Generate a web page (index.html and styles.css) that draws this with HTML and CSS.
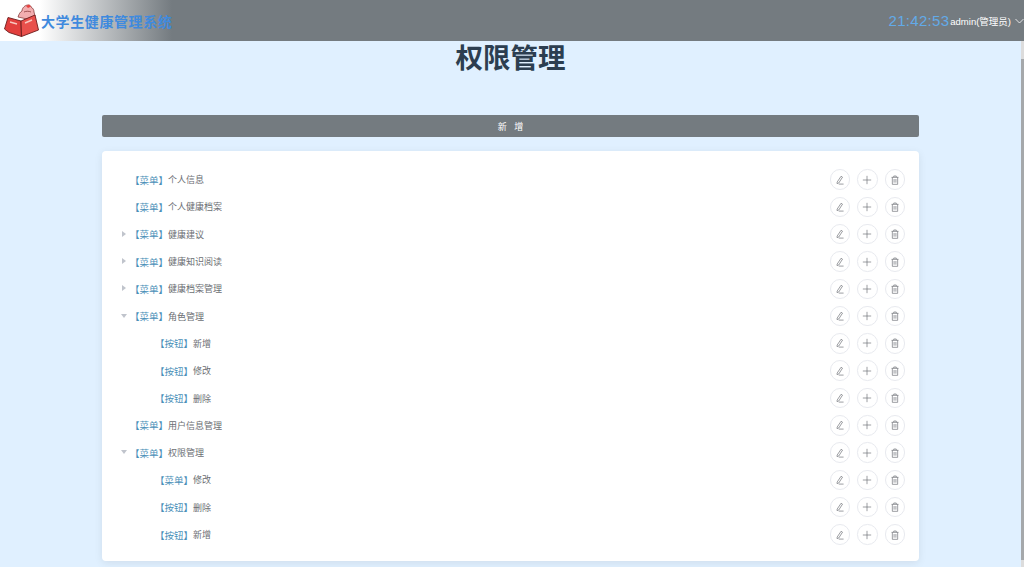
FILE: index.html
```html
<!DOCTYPE html>
<html>
<head>
    <meta charset="utf-8">
    <title>权限管理</title>
    <link rel="stylesheet" href="styles.css">
</head>
<body>
    <svg width="0" height="0" class="defs">
        <symbol id="icon-edit" viewBox="0 0 12 12">
            <path d="M2.600 8.500 7.300 1.500l1.700 1.100-4.500 7-2.100.7z" fill="none" stroke="currentColor" stroke-width=".8"/>
            <path d="M4.500 10.900h5.800" fill="none" stroke="currentColor" stroke-width=".8"/>
        </symbol>
        <symbol id="icon-plus" viewBox="0 0 12 12">
            <path d="M6 1v10M1 6h10" fill="none" stroke="currentColor" stroke-width=".8"/>
        </symbol>
        <symbol id="icon-del" viewBox="0 0 12 12">
            <path d="M1.800 2.800h8.400M4.500 2.800V1.200h3v1.600M2.800 2.800v8.400h6.400V2.800M4.900 4.800v4.400M7.100 4.800v4.400" fill="none" stroke="currentColor" stroke-width=".8"/>
        </symbol>
    </svg>

    <header class="topbar">
        <div class="brand">
            <svg class="logo" width="36" height="34" viewBox="0 0 36 34">
                <path d="M14 13c1-3 2-5 4-6 0-3 3-6 6-6 2 0 3 1 3 2 2 1 3 3 3 5l1 4-8 3z" fill="#f2aeb0" stroke="#7a2b2b" stroke-width=".7"/>
                <path d="M20 8c2-1 5-1 7 0" fill="none" stroke="#7a2b2b" stroke-width=".7"/>
                <path d="M22 2l3-1.500 2 2-3 1.500z" fill="#e8413e"/>
                <path d="M4 13.500 17 17l.5 15.500L5 28.500 0.500 25z" fill="#e23f3d" stroke="#6d1c1c" stroke-width=".9"/>
                <path d="M17 17 31 11l3.500 15-17 6.500z" fill="#e9504c" stroke="#6d1c1c" stroke-width=".9"/>
                <path d="M6 18l7 2M21 19l7-3" stroke="#f8c8c0" stroke-width="1.400" fill="none"/>
            </svg>
            <span class="brand-name">大学生健康管理系统</span>
        </div>
        <div class="user">
            <span class="clock">21:42:53</span>
            <span class="user-name">admin(管理员)</span>
            <svg class="caret" width="9" height="6" viewBox="0 0 9 6"><path d="M.5 1l4 4 4-4" fill="none" stroke="#fff" stroke-width=".8"/></svg>
        </div>
    </header>

    <div class="body-wrap">
        <main class="content">
            <h1 class="page-title">权限管理</h1>
            <button class="add-btn">新&nbsp;&nbsp;&nbsp;增</button>
            <div class="tree-card" id="tree"></div>
        </main>
        <div class="scrollbar"><div class="scroll-thumb"></div></div>
    </div>

    <script>
        const nodes = [
            { type: "菜单", name: "个人信息", level: 0, arrow: "" },
            { type: "菜单", name: "个人健康档案", level: 0, arrow: "" },
            { type: "菜单", name: "健康建议", level: 0, arrow: "right" },
            { type: "菜单", name: "健康知识阅读", level: 0, arrow: "right" },
            { type: "菜单", name: "健康档案管理", level: 0, arrow: "right" },
            { type: "菜单", name: "角色管理", level: 0, arrow: "down" },
            { type: "按钮", name: "新增", level: 1, arrow: "" },
            { type: "按钮", name: "修改", level: 1, arrow: "" },
            { type: "按钮", name: "删除", level: 1, arrow: "" },
            { type: "菜单", name: "用户信息管理", level: 0, arrow: "" },
            { type: "菜单", name: "权限管理", level: 0, arrow: "down" },
            { type: "菜单", name: "修改", level: 1, arrow: "" },
            { type: "按钮", name: "删除", level: 1, arrow: "" },
            { type: "按钮", name: "新增", level: 1, arrow: "" }
        ];

        const tree = document.getElementById("tree");
        nodes.forEach(node => {
            const row = document.createElement("div");
            row.className = "tree-row level-" + node.level;
            row.innerHTML = `
                <span class="arrow ${node.arrow}"></span>
                <span class="node-type">【${node.type}】</span>
                <span class="node-name">${node.name}</span>
                <span class="actions">
                    <button class="circle-btn"><svg width="10" height="10"><use href="#icon-edit"/></svg></button>
                    <button class="circle-btn"><svg width="10" height="10"><use href="#icon-plus"/></svg></button>
                    <button class="circle-btn"><svg width="10" height="10"><use href="#icon-del"/></svg></button>
                </span>
            `;
            tree.appendChild(row);
        });
    </script>
</body>
</html>
```

FILE: styles.css
```css
html, body {
    height: 100%;
    margin: 0;
    overflow: hidden;
}
body {
    background: #e0f0ff;
    font-family: "Liberation Sans", "Noto Sans CJK SC", sans-serif;
    display: flex;
    flex-direction: column;
}
.defs {
    display: none;
}
.topbar {
    height: 41px;
    flex: none;
    display: flex;
    justify-content: space-between;
    align-items: center;
    background: linear-gradient(90deg, #fff 0, #fff 40px, #747b80 172px);
}
.brand {
    display: flex;
    align-items: center;
    padding-left: 4px;
}
.logo {
    display: block;
}
.brand-name {
    margin-left: 1px;
    font-size: 14px;
    font-weight: bold;
    letter-spacing: .6px;
    color: #3f8ade;
}
.user {
    display: flex;
    align-items: center;
}
.clock {
    font-size: 15px;
    letter-spacing: .3px;
    color: #62aae8;
}
.user-name {
    margin-left: 1px;
    font-size: 9.5px;
    color: #fff;
}
.caret {
    margin-left: 4px;
}
.body-wrap {
    flex: 1;
    min-height: 0;
    display: flex;
}
.content {
    flex: 1;
    min-width: 0;
    padding: 0 102px;
}
.scrollbar {
    width: 3px;
    padding-top: 18px;
    padding-bottom: 7px;
    box-sizing: border-box;
    background: #dcdcdc;
}
.scroll-thumb {
    height: 100%;
    background: #a5a8ab;
}
.page-title {
    margin: 0;
    height: 74px;
    padding-top: 1px;
    box-sizing: border-box;
    font-size: 27.5px;
    line-height: 34px;
    text-align: center;
    color: #2c3e50;
}
.add-btn {
    display: block;
    width: 100%;
    height: 22px;
    padding: 0;
    border: 0;
    border-radius: 2px;
    background: #747b80;
    color: #fff;
    font: 9px "Liberation Sans", "Noto Sans CJK SC", sans-serif;
}
.tree-card {
    margin-top: 14px;
    height: 410px;
    box-sizing: border-box;
    padding: 15px 14px 0 19px;
    background: #fff;
    border-radius: 4px;
    box-shadow: 0 2px 8px rgba(0, 0, 0, .08);
}
.tree-row {
    height: 27.3px;
    display: flex;
    align-items: center;
    font-size: 9px;
}
.level-1 {
    padding-left: 25px;
}
.arrow {
    width: 9px;
    height: 9px;
    flex: none;
    position: relative;
}
.arrow.right::before,
.arrow.down::before {
    content: "";
    position: absolute;
    border-style: solid;
    border-color: transparent;
}
.arrow.right::before {
    left: 1px;
    top: 1px;
    border-width: 3px 0 3px 4px;
    border-left-color: #c0c4cc;
}
.arrow.down::before {
    left: 0;
    top: 2px;
    border-width: 4px 3px 0 3px;
    border-top-color: #c0c4cc;
}
.node-type {
    font-size: 9.5px;
    color: #4a8fb8;
}
.node-name {
    color: #6b6e73;
}
.actions {
    margin-left: auto;
    display: flex;
    gap: 7px;
}
.circle-btn {
    width: 20.5px;
    height: 20.5px;
    padding: 0;
    display: flex;
    align-items: center;
    justify-content: center;
    border: 1px solid #e8eaef;
    border-radius: 50%;
    background: #fff;
    color: #6a6d73;
}
```
